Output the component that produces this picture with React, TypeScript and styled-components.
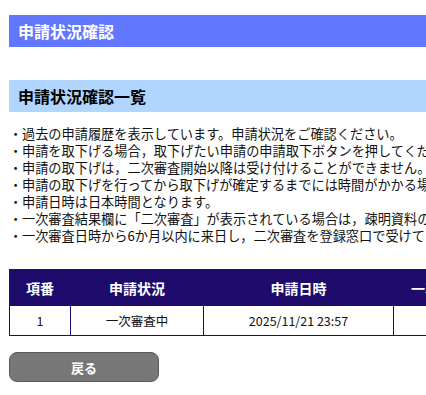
import React from "react";
import styled, { createGlobalStyle } from "styled-components";

const GlobalStyle = createGlobalStyle`
  html, body {
    margin: 0;
    padding: 0;
    background: #ffffff;
    overflow: hidden;
  }
  body {
    font-family: "Noto Sans CJK JP", "Noto Sans", sans-serif;
    color: #111111;
  }
`;

const Page = styled.div`
  width: 720px;
  padding: 15px 0 0 9px;
  display: flex;
  flex-direction: column;
`;

const PageTitle = styled.h1`
  margin: 0;
  height: 32px;
  display: flex;
  align-items: center;
  padding-left: 9px;
  background: #6177ff;
  color: #ffffff;
  font-size: 16px;
  font-weight: 700;
`;

const SectionTitle = styled.h2`
  margin: 33px 0 0;
  height: 32px;
  display: flex;
  align-items: center;
  padding-left: 9px;
  background: #b0d6ff;
  color: #000000;
  font-size: 16px;
  font-weight: 700;
`;

const Notes = styled.ul`
  margin: 13px 0 0;
  padding: 0;
  list-style: none;
  font-size: 13.2px;
  line-height: 17px;
  white-space: nowrap;
`;

const Note = styled.li`
  display: flex;
  &::before {
    content: "・";
    width: 13px;
    flex: none;
  }
`;

const Table = styled.table`
  margin-top: 25px;
  border-collapse: collapse;
  table-layout: fixed;
  width: 616px;
`;

const HeadCell = styled.th<{ $w: number }>`
  width: ${(p) => p.$w}px;
  height: 35px;
  padding: 0;
  background: #1e0b6c;
  color: #ffffff;
  font-size: 14px;
  font-weight: 700;
  text-align: center;
  border: 1px solid #1e0b6c;
`;

const Cell = styled.td`
  height: 29px;
  padding: 0;
  border: 1px solid #1e0b6c;
  font-size: 12.5px;
  text-align: center;
  color: #111111;
`;

const BackButton = styled.button`
  margin-top: 16px;
  width: 150px;
  height: 30px;
  border-radius: 8px;
  border: 1px solid #5a5a5a;
  background: #777777;
  color: #ffffff;
  font-family: "Noto Sans CJK JP", sans-serif;
  font-size: 13px;
  font-weight: 700;
  cursor: pointer;
`;

const notes = [
  "過去の申請履歴を表示しています。申請状況をご確認ください。",
  "申請を取下げる場合，取下げたい申請の申請取下ボタンを押してください。",
  "申請の取下げは，二次審査開始以降は受け付けることができません。",
  "申請の取下げを行ってから取下げが確定するまでには時間がかかる場合があります。",
  "申請日時は日本時間となります。",
  "一次審査結果欄に「二次審査」が表示されている場合は，疎明資料の原本をご用意ください。",
  "一次審査日時から6か月以内に来日し，二次審査を登録窓口で受けてください。",
];

const rows = [{ no: 1, status: "一次審査中", date: "2025/11/21 23:57" }];

export default function App() {
  return (
    <>
      <GlobalStyle />
      <Page>
        <PageTitle>申請状況確認</PageTitle>
        <SectionTitle>申請状況確認一覧</SectionTitle>
        <Notes>
          {notes.map((n) => (
            <Note key={n}>{n}</Note>
          ))}
        </Notes>
        <div>
          <Table>
            <thead>
              <tr>
                <HeadCell $w={60}>項番</HeadCell>
                <HeadCell $w={132}>申請状況</HeadCell>
                <HeadCell $w={189}>申請日時</HeadCell>
                <HeadCell $w={118}>一次審査結果</HeadCell>
                <HeadCell $w={117}>申請取下</HeadCell>
              </tr>
            </thead>
            <tbody>
              {rows.map((r) => (
                <tr key={r.no}>
                  <Cell>{r.no}</Cell>
                  <Cell>{r.status}</Cell>
                  <Cell>{r.date}</Cell>
                  <Cell></Cell>
                  <Cell></Cell>
                </tr>
              ))}
            </tbody>
          </Table>
        </div>
        <div>
          <BackButton type="button">戻る</BackButton>
        </div>
      </Page>
    </>
  );
}
